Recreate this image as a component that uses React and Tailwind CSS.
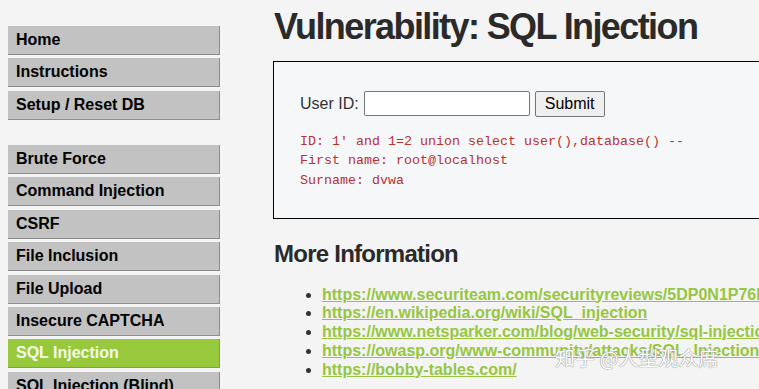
import React from 'react';

const MENU_TOP = ['Home', 'Instructions', 'Setup / Reset DB'];
const MENU_VULNS = [
  'Brute Force',
  'Command Injection',
  'CSRF',
  'File Inclusion',
  'File Upload',
  'Insecure CAPTCHA',
  'SQL Injection',
  'SQL Injection (Blind)',
];
const LINKS = [
  'https://www.securiteam.com/securityreviews/5DP0N1P76E.html',
  'https://en.wikipedia.org/wiki/SQL_injection',
  'https://www.netsparker.com/blog/web-security/sql-injection-cheat-sheet/',
  'https://owasp.org/www-community/attacks/SQL_Injection',
  'https://bobby-tables.com/',
];

function MenuItem({ label, active }) {
  return (
    <div
      className={`h-[29px] pl-[8px] leading-[28px] text-[16px] font-bold whitespace-nowrap border-b border-r ${
        active
          ? 'bg-[#98c93c] text-[#f4fae8] border-[#7ea52f]'
          : 'bg-[#c2c2c2] text-black border-[#8c8c8c]'
      }`}
    >
      {label}
    </div>
  );
}

export default function App() {
  return (
    <div
      className="relative flex h-[389px] w-[759px] overflow-hidden bg-[#f4f4f4] text-[#2b2b2b]"
      style={{ fontFamily: '"Liberation Sans", Arial, sans-serif' }}
    >
      <div className="w-[212px] ml-[8px] pt-[26px] shrink-0">
        <div className="flex flex-col gap-[3.43px]">
          {MENU_TOP.map((m) => <MenuItem key={m} label={m} />)}
        </div>
        <div className="flex flex-col gap-[3.43px] mt-[25px]">
          {MENU_VULNS.map((m) => <MenuItem key={m} label={m} active={m === 'SQL Injection'} />)}
        </div>
      </div>

      <div className="ml-[53px] flex-1 min-w-0">
        <h1 className="mt-[8.5px] ml-[1px] text-[36px] leading-[36px] font-bold tracking-[-1.6px] text-[#2a2a2a] whitespace-nowrap">
          Vulnerability: SQL Injection
        </h1>
        <div className="mt-[16px] h-[158px] w-[520px] border border-black bg-[#f6f7f8] pl-[26px] pt-[29px]">
          <div className="flex items-center text-[16px] text-[#333]">
            <span>User ID:</span>
            <input className="ml-[5px] h-[25px] w-[166px] border border-[#767676] rounded-[2px] bg-white" />
            <button className="ml-[5px] h-[26px] w-[70px] border border-[#767676] rounded-[2px] bg-[#efefef] text-[16px] text-black">
              Submit
            </button>
          </div>
          <pre
            className="mt-[15px] text-[13.33px] leading-[19.7px] text-[#b8312f]"
            style={{ fontFamily: '"Liberation Mono", "Courier New", monospace' }}
          >
            {"ID: 1' and 1=2 union select user(),database() --\nFirst name: root@localhost\nSurname: dvwa"}
          </pre>
        </div>
        <h2 className="mt-[23px] ml-[1px] text-[24px] leading-[24px] font-bold tracking-[-0.75px] text-[#2a2a2a]">
          More Information
        </h2>
        <ul className="mt-[20px] list-disc pl-[49px] text-[16px] leading-[18.75px] font-bold">
          {LINKS.map((l) => (
            <li key={l} className="whitespace-nowrap marker:text-[#333]">
              <a href="#" className="text-[#96c640] underline">{l}</a>
            </li>
          ))}
        </ul>
      </div>

      <div
        className="absolute left-[555px] top-[343px] text-[20px] text-white whitespace-nowrap"
        style={{
          fontFamily: '"Noto Sans CJK SC", sans-serif',
          textShadow: '0 0 1px #888, 0 0 1px #888',
        }}
      >
        知乎 @人型观众席
      </div>
    </div>
  );
}
